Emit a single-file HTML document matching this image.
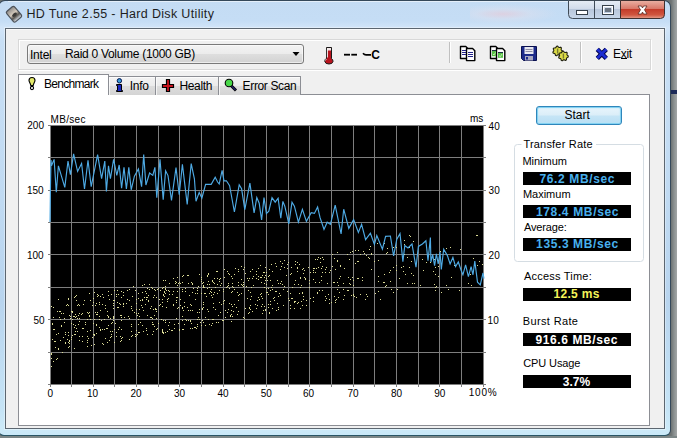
<!DOCTYPE html>
<html><head><meta charset="utf-8">
<style>
*{margin:0;padding:0;box-sizing:border-box}
html,body{width:677px;height:438px;overflow:hidden}
body{position:relative;background:linear-gradient(90deg,#6c7272 671px,#8a9090 674px,#a2a6a6 677px);font-family:"Liberation Sans",sans-serif;color:#000}
.a{position:absolute}
.t{position:absolute;white-space:nowrap;line-height:1.15}
#deskb{left:0;top:436px;width:677px;height:2px;background:#7c8686}
#frame{left:-2px;top:0;width:673px;height:436px;border:1px solid #34485a;border-bottom-color:#2a5666;border-radius:7px 7px 6px 6px;background:linear-gradient(180deg,#c4dcf4 0px,#c5ddf5 20px,#d2e5f8 27px,#c8dff5 40px,#c0daf2 200px,#b8d4ee 300px,#c6e4f6 410px,#cdeaf8 428px,#c8e8f8 435px)}
#tbhl{left:8px;top:1px;width:655px;height:1px;background:rgba(255,255,255,.55)}
#client{left:5px;top:28px;width:660px;height:401px;border:1px solid #5c6670;background:#f0f0f0;box-shadow:inset 0 1px 0 #fafafa,0 0 0 1px rgba(255,255,255,.35)}
#toolbar{left:18px;top:39px;width:633px;height:31px;border:1px solid #d8d8d8;box-shadow:inset 1px 1px 0 #fff,1px 1px 0 #fff}
#combo{left:27px;top:44px;width:277px;height:20px;border:1px solid #7a7a7a;border-radius:3px;background:linear-gradient(180deg,#f3f3f3 0%,#ececec 48%,#dedede 52%,#d2d2d2 100%);box-shadow:inset 0 0 0 1px rgba(255,255,255,.6)}
#panel{left:18px;top:94px;width:632px;height:332px;border:1px solid #8c8e94;background:#fff}
.tab{position:absolute;border:1px solid #8c8e94;border-bottom:none;background:linear-gradient(180deg,#f3f3f3 0%,#ebebeb 50%,#dddddd 51%,#d4d4d4 100%);box-shadow:inset 1px 1px 0 rgba(255,255,255,.7)}
#tab0{left:18px;top:74px;width:91px;height:21px;background:#fff;box-shadow:none}
.val{position:absolute;left:523px;width:108px;height:13px;background:#000}
#startb{left:536px;top:106px;width:86px;height:19px;border:1px solid #2f86bb;border-radius:3px;background:linear-gradient(180deg,#e8f5fc 0%,#dbeef8 48%,#c6e5f6 52%,#b9dff4 100%);box-shadow:inset 0 0 0 1px #84d2f2,inset 0 0 2px 1px #b8e6f8}
</style></head><body>
<div class="a" id="deskb"></div>
<div class="a" id="frame"></div>
<div class="a" id="tbhl"></div>
<div class="a" style="left:470px;top:4px;width:110px;height:20px;background:radial-gradient(ellipse 50% 50% at 30% 50%,rgba(240,200,210,.55),rgba(230,225,235,.35) 50%,rgba(220,230,240,0) 100%)"></div>
<div class="a" style="left:671px;top:90px;width:6px;height:4px;background:#1c2a58"></div>
<div class="a" id="client"></div>
<div class="a" id="toolbar"></div>
<div class="a" id="combo"></div>
<div class="a" id="panel"></div>
<div class="tab" style="left:108px;top:76px;width:48px;height:19px"></div>
<div class="tab" style="left:155px;top:76px;width:64px;height:19px"></div>
<div class="tab" style="left:218px;top:76px;width:83px;height:19px"></div>
<div class="tab" id="tab0"></div>
<div class="a" id="startb"></div>
<div class="val" style="top:172px"></div>
<div class="val" style="top:205px"></div>
<div class="val" style="top:238px"></div>
<div class="val" style="top:288px"></div>
<div class="val" style="top:333px"></div>
<div class="val" style="top:375px"></div>
<svg width="677" height="438" style="position:absolute;left:0;top:0">
<!-- group box -->
<path d="M521.5 144.5H517.5Q514.5 144.5 514.5 147.5V258.5Q514.5 261.5 517.5 261.5H640.5Q643.5 261.5 643.5 258.5V147.5Q643.5 144.5 640.5 144.5H596" fill="none" stroke="#d5dde3"/>
<!-- caption buttons -->
<defs>
<linearGradient id="gbtn" x1="0" y1="0" x2="0" y2="1"><stop offset="0" stop-color="#e7edf5"/><stop offset=".45" stop-color="#d2dceb"/><stop offset=".5" stop-color="#b9c7db"/><stop offset="1" stop-color="#c9d8ea"/></linearGradient>
<linearGradient id="gcls" x1="0" y1="0" x2="0" y2="1"><stop offset="0" stop-color="#eab1a4"/><stop offset=".45" stop-color="#d9796a"/><stop offset=".5" stop-color="#c43c2a"/><stop offset=".8" stop-color="#d0563f"/><stop offset="1" stop-color="#e6a08d"/></linearGradient>
</defs>
<path d="M568.5 0.5V14.5Q568.5 18.5 572.5 18.5H620.5V0.5Z" fill="url(#gbtn)" stroke="#3f4a56"/>
<path d="M594.5 0.5V18.5" stroke="#3f4a56"/>
<path d="M620.5 0.5H664.5V14.5Q664.5 18.5 660.5 18.5H620.5Z" fill="url(#gcls)" stroke="#3f3030"/>
<rect x="576.5" y="10.5" width="11" height="4" fill="#fff" stroke="#36404a"/>
<rect x="602.5" y="5.5" width="11" height="9" fill="none" stroke="#36404a"/>
<rect x="603.5" y="6.5" width="9" height="7" fill="none" stroke="#fff"/>
<rect x="605" y="8" width="6" height="4" fill="#6a7480"/>
<path d="M638 6L641.5 6L642.5 8L643.5 6L647 6L644.5 9.8L647 14L643.5 14L642.5 12L641.5 14L638 14L640.5 9.8Z" fill="#fff" stroke="#5a2a22" stroke-width=".8"/>
<!-- title icon hdd -->
<defs><linearGradient id="ghdd" x1="0" y1="0" x2="0" y2="1"><stop offset="0" stop-color="#8c8a88"/><stop offset=".45" stop-color="#d6cbbd"/><stop offset=".7" stop-color="#5a5650"/><stop offset="1" stop-color="#dfe6ee"/></linearGradient></defs>
<g transform="translate(14,14.2) rotate(-40)">
<rect x="-5.2" y="-6.8" width="10.4" height="13.6" rx="1.8" fill="url(#ghdd)" stroke="#4c525a" stroke-width="1.2"/>
<ellipse cx="0" cy="0.8" rx="2.8" ry="1.6" fill="#3c3a38"/>
</g>
<!-- thermometer -->
<path d="M326.5 47.5H331.5V58.5Q333.2 59.8 333 61.5Q332.5 64 329 64Q325.3 64 324.8 61.5Q324.5 59.6 326.5 58.3Z" fill="#b8141e" stroke="#1a1a1a" stroke-width="1"/>
<rect x="327" y="48" width="4" height="2.5" fill="#f4e8e8"/>
<path d="M327.4 48.3V57.5" stroke="#f8f0f0" stroke-width="1"/>
<path d="M325.5 60.5Q325.8 59.6 326.6 59" stroke="#fff" stroke-width=".8" fill="none"/>
<rect x="344" y="53.8" width="6" height="1.8" fill="#000"/>
<rect x="351.3" y="53.8" width="5.7" height="1.8" fill="#000"/>
<path d="M363 53.2Q364.5 55 366.5 54.8H371" stroke="#000" stroke-width="1.7" fill="none"/>
<!-- separators -->
<path d="M449.5 42V63" stroke="#c0c0c0"/><path d="M450.5 42V63" stroke="#fff"/>
<path d="M580.5 42V63" stroke="#c0c0c0"/><path d="M581.5 42V63" stroke="#fff"/>
<!-- copy icon 1 -->
<g stroke="#000" stroke-width="1.4" fill="#fff" stroke-linejoin="round">
<path d="M460.5 46.5H465.8L467.5 48.2V58.5H460.5Z"/>
<path d="M466.5 48.5H472.6L474.8 50.7V60.6H466.5Z"/>
<path d="M490.5 46.5H495.8L497.5 48.2V58.5H490.5Z"/>
<path d="M496.5 48.5H502.6L504.8 50.7V60.6H496.5Z"/>
</g>
<path d="M462 50.5H466M462 52.5H466M462 54.5H466M468 52.5H473M468 54.5H473M468 56.5H473" stroke="#24248a" stroke-width="1.1"/>
<rect x="492" y="50.2" width="4" height="6" fill="#58c048"/><path d="M492 50.5H496" stroke="#1a3040"/>
<rect x="498" y="52.2" width="5" height="5.6" fill="#58c048"/><path d="M498 52.5H503" stroke="#1a3040"/>
<path d="M493 54L494 55L495.5 52.5M499 55.5L500.3 56.7L502 54" stroke="#d8f8c0" stroke-width=".8" fill="none"/>
<!-- floppy -->
<path d="M521.5 46.5H536.5V60.5H523.5L521.5 58.5Z" fill="#1c2a8a" stroke="#0a1050"/>
<rect x="524.5" y="47" width="9" height="7" fill="#e8e8f0"/>
<path d="M525.5 49.5H532.5M525.5 51.5H532.5" stroke="#9090a8"/>
<rect x="525" y="56" width="8" height="4.5" fill="#a8a8c0"/>
<rect x="526" y="57" width="2" height="2.5" fill="#1c2a8a"/>
<!-- gears -->
<path d="M562.50 51.00L562.38 52.09L561.11 52.69L560.65 53.43L560.66 54.83L559.73 55.41L558.47 54.80L557.60 54.90L556.51 55.78L555.47 55.41L555.17 54.05L554.55 53.43L553.19 53.13L552.82 52.09L553.70 51.00L553.80 50.13L553.19 48.87L553.77 47.94L555.17 47.95L555.91 47.49L556.51 46.22L557.60 46.10L558.47 47.20L559.29 47.49L560.66 47.17L561.43 47.94L561.11 49.31L561.40 50.13Z" fill="#dcdc48" stroke="#202010" stroke-width="1.1" stroke-linejoin="round"/>
<path d="M557.6 48.5V53.5" stroke="#7a7a30" stroke-width="1.4"/>
<path d="M568.30 56.00L568.18 57.09L566.91 57.69L566.45 58.43L566.46 59.83L565.53 60.41L564.27 59.80L563.40 59.90L562.31 60.78L561.27 60.41L560.97 59.05L560.35 58.43L558.99 58.13L558.62 57.09L559.50 56.00L559.60 55.13L558.99 53.87L559.57 52.94L560.97 52.95L561.71 52.49L562.31 51.22L563.40 51.10L564.27 52.20L565.09 52.49L566.46 52.17L567.23 52.94L566.91 54.31L567.20 55.13Z" fill="#dcdc48" stroke="#202010" stroke-width="1.1" stroke-linejoin="round"/>
<path d="M563.4 53.5V58.5" stroke="#7a7a30" stroke-width="1.4"/>
<!-- exit X -->
<path d="M597.3 49.3L606.3 58.3M606.3 49.3L597.3 58.3" stroke="#000048" stroke-width="4.6" stroke-linecap="butt"/>
<path d="M597.3 49.3L606.3 58.3M606.3 49.3L597.3 58.3" stroke="#1c2cd0" stroke-width="2.8" stroke-linecap="butt"/>
<path d="M621 58.5H627" stroke="#000"/>
<!-- dropdown arrow -->
<path d="M292.5 52H299.5L296 56Z" fill="#000"/>
<!-- bulb -->
<path d="M32 77.5C30 77.5 29 79 29 80.5C29 82 30.5 83.5 30.8 85.5H33.2C33.5 83.5 35 82 35 80.5C35 79 34 77.5 32 77.5Z" fill="#e4ea6a" stroke="#000" stroke-width="1.1"/>
<circle cx="32" cy="88" r="1.6" fill="#fff" stroke="#000" stroke-width="1.1"/>
<!-- info -->
<circle cx="119.4" cy="80.8" r="2.2" fill="#3aa0d8" stroke="#001050" stroke-width="1"/>
<path d="M116.5 84.5H121.5V90.5H122.5V91.5H116.5V90.5H117.5V85.5H116.5Z" fill="#1a28c0" stroke="#000" stroke-width="1"/>
<!-- health cross -->
<path d="M166.5 79.5H169.5V84.5H173.5V87.5H169.5V91.5H166.5V87.5H162.5V84.5H166.5Z" fill="#c8141e" stroke="#000" stroke-width="1.2"/>
<!-- magnifier -->
<path d="M231 85.5L236 90.5" stroke="#000" stroke-width="3"/>
<path d="M231 85.5L235.5 90" stroke="#202060" stroke-width="1.6"/>
<circle cx="229" cy="83" r="3.8" fill="#48d848" stroke="#000" stroke-width="1.1"/>
</svg>

<svg width="677" height="438" viewBox="0 0 677 438" style="position:absolute;left:0;top:0">
<rect x="50" y="125" width="434" height="260" fill="#000"/>
<path d="M50.5 125V387M71.5 125V387M93.5 125V387M114.5 125V387M136.5 125V387M158.5 125V387M179.5 125V387M201.5 125V387M223.5 125V387M244.5 125V387M266.5 125V387M288.5 125V387M309.5 125V387M331.5 125V387M353.5 125V387M374.5 125V387M396.5 125V387M418.5 125V387M439.5 125V387M461.5 125V387M483.5 125V387M48 125.5H486M48 157.5H486M48 190.5H486M48 222.5H486M48 254.5H486M48 287.5H486M48 319.5H486M48 352.5H486M48 384.5H486" stroke="#7e7e7e" stroke-width="1" fill="none"/>
<path d="M190 310h1v1h-1zM82 313h1v1h-1zM76 295h1v1h-1zM238 271h1v1h-1zM234 274h1v1h-1zM147 334h1v1h-1zM300 308h1v1h-1zM71 311h1v1h-1zM113 305h1v1h-1zM403 271h1v1h-1zM327 283h1v1h-1zM78 304h1v1h-1zM344 268h1v1h-1zM303 273h1v1h-1zM156 309h1v1h-1zM175 283h1v1h-1zM231 276h1v1h-1zM262 298h1v1h-1zM301 301h1v1h-1zM337 289h1v1h-1zM217 271h1v1h-1zM250 271h1v1h-1zM76 300h1v1h-1zM157 328h1v1h-1zM85 322h1v1h-1zM230 315h1v1h-1zM127 299h1v1h-1zM260 277h1v1h-1zM52 324h1v1h-1zM349 283h1v1h-1zM343 299h1v1h-1zM223 303h1v1h-1zM77 305h1v1h-1zM121 291h1v1h-1zM51 306h1v1h-1zM208 319h1v1h-1zM316 268h1v1h-1zM201 279h1v1h-1zM252 269h1v1h-1zM95 305h1v1h-1zM409 235h1v1h-1zM114 290h1v1h-1zM163 287h1v1h-1zM387 252h1v1h-1zM148 301h1v1h-1zM63 313h1v1h-1zM162 332h1v1h-1zM244 318h1v1h-1zM146 293h1v1h-1zM139 332h1v1h-1zM87 342h1v1h-1zM257 305h1v1h-1zM194 327h1v1h-1zM222 320h1v1h-1zM364 253h1v1h-1zM116 332h1v1h-1zM114 342h1v1h-1zM334 282h1v1h-1zM107 342h1v1h-1zM331 302h1v1h-1zM238 311h1v1h-1zM142 300h1v1h-1zM154 295h1v1h-1zM232 316h1v1h-1zM203 304h1v1h-1zM280 261h1v1h-1zM241 266h1v1h-1zM396 265h1v1h-1zM191 305h1v1h-1zM389 272h1v1h-1zM158 323h1v1h-1zM270 301h1v1h-1zM315 282h1v1h-1zM350 279h1v1h-1zM257 300h1v1h-1zM163 332h1v1h-1zM413 241h1v1h-1zM241 279h1v1h-1zM82 336h1v1h-1zM438 276h1v1h-1zM336 299h1v1h-1zM261 306h1v1h-1zM120 315h1v1h-1zM197 290h1v1h-1zM362 277h1v1h-1zM241 284h1v1h-1zM320 258h1v1h-1zM165 322h1v1h-1zM167 301h1v1h-1zM162 330h1v1h-1zM297 262h1v1h-1zM75 317h1v1h-1zM82 328h1v1h-1zM397 289h1v1h-1zM79 318h1v1h-1zM197 324h1v1h-1zM166 307h1v1h-1zM154 289h1v1h-1zM72 311h1v1h-1zM182 291h1v1h-1zM267 280h1v1h-1zM58 299h1v1h-1zM132 335h1v1h-1zM96 314h1v1h-1zM264 283h1v1h-1zM269 313h1v1h-1zM199 312h1v1h-1zM325 272h1v1h-1zM74 297h1v1h-1zM371 253h1v1h-1zM87 340h1v1h-1zM340 265h1v1h-1zM177 285h1v1h-1zM243 317h1v1h-1zM156 297h1v1h-1zM205 293h1v1h-1zM256 274h1v1h-1zM269 275h1v1h-1zM89 293h1v1h-1zM60 311h1v1h-1zM303 296h1v1h-1zM191 282h1v1h-1zM69 346h1v1h-1zM401 267h1v1h-1zM268 304h1v1h-1zM350 252h1v1h-1zM108 295h1v1h-1zM322 290h1v1h-1zM262 304h1v1h-1zM282 263h1v1h-1zM369 249h1v1h-1zM165 289h1v1h-1zM264 287h1v1h-1zM317 259h1v1h-1zM114 329h1v1h-1zM182 276h1v1h-1zM77 331h1v1h-1zM176 302h1v1h-1zM252 311h1v1h-1zM137 334h1v1h-1zM58 348h1v1h-1zM167 331h1v1h-1zM142 292h1v1h-1zM108 317h1v1h-1zM150 308h1v1h-1zM61 326h1v1h-1zM245 273h1v1h-1zM199 319h1v1h-1zM51 358h1v1h-1zM102 329h1v1h-1zM211 325h1v1h-1zM305 279h1v1h-1zM169 283h1v1h-1zM165 288h1v1h-1zM212 319h1v1h-1zM288 262h1v1h-1zM174 328h1v1h-1zM105 308h1v1h-1zM179 330h1v1h-1zM163 295h1v1h-1zM291 267h1v1h-1zM120 336h1v1h-1zM265 309h1v1h-1zM111 294h1v1h-1zM198 286h1v1h-1zM162 329h1v1h-1zM229 288h1v1h-1zM197 288h1v1h-1zM268 307h1v1h-1zM144 297h1v1h-1zM223 320h1v1h-1zM60 340h1v1h-1zM304 277h1v1h-1zM158 288h1v1h-1zM276 310h1v1h-1zM289 300h1v1h-1zM151 317h1v1h-1zM182 289h1v1h-1zM99 319h1v1h-1zM302 269h1v1h-1zM310 272h1v1h-1zM250 299h1v1h-1zM152 334h1v1h-1zM355 250h1v1h-1zM266 284h1v1h-1zM162 331h1v1h-1zM148 300h1v1h-1zM232 278h1v1h-1zM269 312h1v1h-1zM185 288h1v1h-1zM146 299h1v1h-1zM131 308h1v1h-1zM114 300h1v1h-1zM73 316h1v1h-1zM131 326h1v1h-1zM64 318h1v1h-1zM212 280h1v1h-1zM52 323h1v1h-1zM205 317h1v1h-1zM237 292h1v1h-1zM212 281h1v1h-1zM208 273h1v1h-1zM228 309h1v1h-1zM68 298h1v1h-1zM197 326h1v1h-1zM317 293h1v1h-1zM187 275h1v1h-1zM61 325h1v1h-1zM217 293h1v1h-1zM264 272h1v1h-1zM313 272h1v1h-1zM207 276h1v1h-1zM136 299h1v1h-1zM78 324h1v1h-1zM191 323h1v1h-1zM87 319h1v1h-1zM357 261h1v1h-1zM231 304h1v1h-1zM338 297h1v1h-1zM177 297h1v1h-1zM369 258h1v1h-1zM156 329h1v1h-1zM300 278h1v1h-1zM150 317h1v1h-1zM256 308h1v1h-1zM446 248h1v1h-1zM102 343h1v1h-1zM211 295h1v1h-1zM163 332h1v1h-1zM96 324h1v1h-1zM145 291h1v1h-1zM139 316h1v1h-1zM332 254h1v1h-1zM192 284h1v1h-1zM185 319h1v1h-1zM287 264h1v1h-1zM221 304h1v1h-1zM90 330h1v1h-1zM228 285h1v1h-1zM295 280h1v1h-1zM208 311h1v1h-1zM138 332h1v1h-1zM234 289h1v1h-1zM121 317h1v1h-1zM89 312h1v1h-1zM268 276h1v1h-1zM276 266h1v1h-1zM262 313h1v1h-1zM136 335h1v1h-1zM74 316h1v1h-1zM407 283h1v1h-1zM146 328h1v1h-1zM409 247h1v1h-1zM223 289h1v1h-1zM104 329h1v1h-1zM438 266h1v1h-1zM378 291h1v1h-1zM101 320h1v1h-1zM321 276h1v1h-1zM302 292h1v1h-1zM244 267h1v1h-1zM318 267h1v1h-1zM248 290h1v1h-1zM97 314h1v1h-1zM90 319h1v1h-1zM68 299h1v1h-1zM271 287h1v1h-1zM214 278h1v1h-1zM134 312h1v1h-1zM122 337h1v1h-1zM79 336h1v1h-1zM119 303h1v1h-1zM403 266h1v1h-1zM164 296h1v1h-1zM66 305h1v1h-1zM390 270h1v1h-1zM325 300h1v1h-1zM290 305h1v1h-1zM96 325h1v1h-1zM221 283h1v1h-1zM206 296h1v1h-1zM127 290h1v1h-1zM405 274h1v1h-1zM337 252h1v1h-1zM65 332h1v1h-1zM237 314h1v1h-1zM108 325h1v1h-1zM60 319h1v1h-1zM96 303h1v1h-1zM303 268h1v1h-1zM320 262h1v1h-1zM115 323h1v1h-1zM224 269h1v1h-1zM329 272h1v1h-1zM329 303h1v1h-1zM367 296h1v1h-1zM70 318h1v1h-1zM153 324h1v1h-1zM56 359h1v1h-1zM112 322h1v1h-1zM270 304h1v1h-1zM126 303h1v1h-1zM71 339h1v1h-1zM360 294h1v1h-1zM148 295h1v1h-1zM67 339h1v1h-1zM358 278h1v1h-1zM239 294h1v1h-1zM165 332h1v1h-1zM144 284h1v1h-1zM163 320h1v1h-1zM192 292h1v1h-1zM154 315h1v1h-1zM183 310h1v1h-1zM84 300h1v1h-1zM62 352h1v1h-1zM199 274h1v1h-1zM68 332h1v1h-1zM79 313h1v1h-1zM436 286h1v1h-1zM97 296h1v1h-1zM65 343h1v1h-1zM323 259h1v1h-1zM93 302h1v1h-1zM188 275h1v1h-1zM161 319h1v1h-1zM209 324h1v1h-1zM268 294h1v1h-1zM64 322h1v1h-1zM384 282h1v1h-1zM283 305h1v1h-1zM90 300h1v1h-1zM51 353h1v1h-1zM473 258h1v1h-1zM263 272h1v1h-1zM264 306h1v1h-1zM163 294h1v1h-1zM143 310h1v1h-1zM98 295h1v1h-1zM204 293h1v1h-1zM435 287h1v1h-1zM61 313h1v1h-1zM214 283h1v1h-1zM250 305h1v1h-1zM201 281h1v1h-1zM371 269h1v1h-1zM105 338h1v1h-1zM153 297h1v1h-1zM117 302h1v1h-1zM192 283h1v1h-1zM192 328h1v1h-1zM365 299h1v1h-1zM94 344h1v1h-1zM238 300h1v1h-1zM97 312h1v1h-1zM65 342h1v1h-1zM350 284h1v1h-1zM251 296h1v1h-1zM225 317h1v1h-1zM236 307h1v1h-1zM232 306h1v1h-1zM247 298h1v1h-1zM93 334h1v1h-1zM159 305h1v1h-1zM319 290h1v1h-1zM218 322h1v1h-1zM67 304h1v1h-1zM275 291h1v1h-1zM284 286h1v1h-1zM276 310h1v1h-1zM141 305h1v1h-1zM380 299h1v1h-1zM204 287h1v1h-1zM223 291h1v1h-1zM232 286h1v1h-1zM165 320h1v1h-1zM145 304h1v1h-1zM142 325h1v1h-1zM253 276h1v1h-1zM178 283h1v1h-1zM213 294h1v1h-1zM131 324h1v1h-1zM172 294h1v1h-1zM258 297h1v1h-1zM335 302h1v1h-1zM420 285h1v1h-1zM111 323h1v1h-1zM57 358h1v1h-1zM334 258h1v1h-1zM112 331h1v1h-1zM200 322h1v1h-1zM393 292h1v1h-1zM136 313h1v1h-1zM165 286h1v1h-1zM264 287h1v1h-1zM113 316h1v1h-1zM284 260h1v1h-1zM294 302h1v1h-1zM212 323h1v1h-1zM83 328h1v1h-1zM63 337h1v1h-1zM260 265h1v1h-1zM197 293h1v1h-1zM255 304h1v1h-1zM142 307h1v1h-1zM290 274h1v1h-1zM268 288h1v1h-1zM187 307h1v1h-1zM68 347h1v1h-1zM286 275h1v1h-1zM53 361h1v1h-1zM313 297h1v1h-1zM317 292h1v1h-1zM308 267h1v1h-1zM339 292h1v1h-1zM94 292h1v1h-1zM334 296h1v1h-1zM162 302h1v1h-1zM188 310h1v1h-1zM454 265h1v1h-1zM68 342h1v1h-1zM243 286h1v1h-1zM229 303h1v1h-1zM142 285h1v1h-1zM53 307h1v1h-1zM468 283h1v1h-1zM106 328h1v1h-1zM155 290h1v1h-1zM72 335h1v1h-1zM87 331h1v1h-1zM249 278h1v1h-1zM55 341h1v1h-1zM404 254h1v1h-1zM366 294h1v1h-1zM261 282h1v1h-1zM299 293h1v1h-1zM113 308h1v1h-1zM231 310h1v1h-1zM295 261h1v1h-1zM184 324h1v1h-1zM213 303h1v1h-1zM173 291h1v1h-1zM233 311h1v1h-1zM434 284h1v1h-1zM298 302h1v1h-1zM87 336h1v1h-1zM137 334h1v1h-1zM152 318h1v1h-1zM252 278h1v1h-1zM249 307h1v1h-1zM384 274h1v1h-1zM276 291h1v1h-1zM132 296h1v1h-1zM353 280h1v1h-1zM224 277h1v1h-1zM70 316h1v1h-1zM96 333h1v1h-1zM118 307h1v1h-1zM275 263h1v1h-1zM261 277h1v1h-1zM160 290h1v1h-1zM129 289h1v1h-1zM248 313h1v1h-1zM78 315h1v1h-1zM102 304h1v1h-1zM294 308h1v1h-1zM340 276h1v1h-1zM120 341h1v1h-1zM146 297h1v1h-1zM203 322h1v1h-1zM412 283h1v1h-1zM476 235h1v1h-1zM343 283h1v1h-1zM378 260h1v1h-1zM162 306h1v1h-1zM123 295h1v1h-1zM343 289h1v1h-1zM135 334h1v1h-1zM146 330h1v1h-1zM434 259h1v1h-1zM92 337h1v1h-1zM322 272h1v1h-1zM322 266h1v1h-1zM75 325h1v1h-1zM113 303h1v1h-1zM228 283h1v1h-1zM123 304h1v1h-1zM441 292h1v1h-1zM75 331h1v1h-1zM142 299h1v1h-1zM162 299h1v1h-1zM450 247h1v1h-1zM438 276h1v1h-1zM177 277h1v1h-1zM111 334h1v1h-1zM278 283h1v1h-1zM297 267h1v1h-1zM135 290h1v1h-1zM313 270h1v1h-1zM140 322h1v1h-1zM138 324h1v1h-1zM227 271h1v1h-1zM263 310h1v1h-1zM256 278h1v1h-1zM131 306h1v1h-1zM121 320h1v1h-1zM53 329h1v1h-1zM273 298h1v1h-1zM189 295h1v1h-1zM375 293h1v1h-1zM272 289h1v1h-1zM59 311h1v1h-1zM129 300h1v1h-1zM404 240h1v1h-1zM352 251h1v1h-1zM309 283h1v1h-1zM354 296h1v1h-1zM360 254h1v1h-1zM264 277h1v1h-1zM103 297h1v1h-1zM114 329h1v1h-1zM121 338h1v1h-1zM218 315h1v1h-1zM278 309h1v1h-1zM386 253h1v1h-1zM195 327h1v1h-1zM74 348h1v1h-1zM233 287h1v1h-1zM280 283h1v1h-1zM269 269h1v1h-1zM433 271h1v1h-1zM165 293h1v1h-1zM319 282h1v1h-1zM238 282h1v1h-1zM182 282h1v1h-1zM272 285h1v1h-1zM281 266h1v1h-1zM107 311h1v1h-1zM175 281h1v1h-1zM287 291h1v1h-1zM297 268h1v1h-1zM357 278h1v1h-1zM315 272h1v1h-1zM155 309h1v1h-1zM216 271h1v1h-1zM203 285h1v1h-1zM291 273h1v1h-1zM384 243h1v1h-1zM77 318h1v1h-1zM368 257h1v1h-1zM117 307h1v1h-1zM274 300h1v1h-1zM446 285h1v1h-1zM52 339h1v1h-1zM266 292h1v1h-1zM231 314h1v1h-1zM313 279h1v1h-1zM248 280h1v1h-1zM219 290h1v1h-1zM190 321h1v1h-1zM266 272h1v1h-1zM182 307h1v1h-1zM302 305h1v1h-1zM190 320h1v1h-1zM235 268h1v1h-1zM71 323h1v1h-1zM274 297h1v1h-1zM219 302h1v1h-1zM202 309h1v1h-1zM277 280h1v1h-1zM224 300h1v1h-1zM261 296h1v1h-1zM280 269h1v1h-1zM188 320h1v1h-1zM272 308h1v1h-1zM232 283h1v1h-1zM272 271h1v1h-1zM129 318h1v1h-1zM203 307h1v1h-1zM69 340h1v1h-1zM183 275h1v1h-1zM182 308h1v1h-1zM339 278h1v1h-1zM290 293h1v1h-1zM299 264h1v1h-1zM118 294h1v1h-1zM94 319h1v1h-1zM399 235h1v1h-1zM383 282h1v1h-1zM203 287h1v1h-1zM93 323h1v1h-1zM201 293h1v1h-1zM74 327h1v1h-1zM318 257h1v1h-1zM186 320h1v1h-1zM182 329h1v1h-1zM265 275h1v1h-1zM219 281h1v1h-1zM184 302h1v1h-1zM393 247h1v1h-1zM205 325h1v1h-1zM176 282h1v1h-1zM281 281h1v1h-1zM79 340h1v1h-1zM202 283h1v1h-1zM173 278h1v1h-1zM337 260h1v1h-1zM355 263h1v1h-1zM411 261h1v1h-1zM119 327h1v1h-1zM213 282h1v1h-1zM149 289h1v1h-1zM356 297h1v1h-1zM304 270h1v1h-1zM313 301h1v1h-1zM104 319h1v1h-1zM167 299h1v1h-1zM335 269h1v1h-1zM219 279h1v1h-1zM337 282h1v1h-1zM207 288h1v1h-1zM79 305h1v1h-1zM105 305h1v1h-1zM225 310h1v1h-1zM108 291h1v1h-1zM202 308h1v1h-1zM353 295h1v1h-1zM203 282h1v1h-1zM100 330h1v1h-1zM358 250h1v1h-1zM120 304h1v1h-1zM215 287h1v1h-1zM326 298h1v1h-1zM297 271h1v1h-1zM238 285h1v1h-1zM51 354h1v1h-1zM174 324h1v1h-1zM313 268h1v1h-1zM99 302h1v1h-1zM88 313h1v1h-1zM172 330h1v1h-1zM234 304h1v1h-1zM322 257h1v1h-1zM352 277h1v1h-1zM451 277h1v1h-1zM69 341h1v1h-1zM163 333h1v1h-1zM326 267h1v1h-1zM76 316h1v1h-1zM138 293h1v1h-1zM153 309h1v1h-1zM243 284h1v1h-1zM180 283h1v1h-1zM294 301h1v1h-1zM287 268h1v1h-1zM250 309h1v1h-1zM100 310h1v1h-1zM140 300h1v1h-1zM136 309h1v1h-1zM99 316h1v1h-1zM207 275h1v1h-1zM55 347h1v1h-1zM87 346h1v1h-1zM294 284h1v1h-1zM238 295h1v1h-1zM54 341h1v1h-1zM332 266h1v1h-1zM110 331h1v1h-1zM131 331h1v1h-1zM371 254h1v1h-1zM210 291h1v1h-1zM410 236h1v1h-1zM295 301h1v1h-1zM266 278h1v1h-1zM302 293h1v1h-1zM121 340h1v1h-1zM89 316h1v1h-1zM133 286h1v1h-1zM173 305h1v1h-1zM232 291h1v1h-1zM178 307h1v1h-1zM201 277h1v1h-1zM190 328h1v1h-1zM76 328h1v1h-1zM179 329h1v1h-1zM258 279h1v1h-1zM199 274h1v1h-1zM132 310h1v1h-1zM87 312h1v1h-1zM301 285h1v1h-1zM295 264h1v1h-1zM128 316h1v1h-1zM99 304h1v1h-1zM92 305h1v1h-1zM262 275h1v1h-1zM298 284h1v1h-1zM305 278h1v1h-1zM82 341h1v1h-1zM288 298h1v1h-1zM100 329h1v1h-1zM95 312h1v1h-1zM124 317h1v1h-1zM385 286h1v1h-1zM75 314h1v1h-1zM57 311h1v1h-1zM180 299h1v1h-1zM123 306h1v1h-1zM407 257h1v1h-1zM362 280h1v1h-1zM94 335h1v1h-1zM99 327h1v1h-1zM160 304h1v1h-1zM100 296h1v1h-1zM396 270h1v1h-1zM176 297h1v1h-1zM113 318h1v1h-1zM460 249h1v1h-1zM116 336h1v1h-1zM396 247h1v1h-1zM220 278h1v1h-1zM83 304h1v1h-1zM69 315h1v1h-1zM253 285h1v1h-1zM203 304h1v1h-1zM195 299h1v1h-1zM477 235h1v1h-1zM340 266h1v1h-1zM267 292h1v1h-1zM479 261h1v1h-1zM325 269h1v1h-1zM182 316h1v1h-1zM270 280h1v1h-1zM288 262h1v1h-1zM196 328h1v1h-1zM258 276h1v1h-1zM152 288h1v1h-1zM54 329h1v1h-1zM243 282h1v1h-1zM123 303h1v1h-1zM184 306h1v1h-1zM85 324h1v1h-1zM426 262h1v1h-1zM162 288h1v1h-1zM166 290h1v1h-1zM223 301h1v1h-1zM135 336h1v1h-1zM310 298h1v1h-1zM110 318h1v1h-1zM192 310h1v1h-1zM226 287h1v1h-1zM75 296h1v1h-1zM321 280h1v1h-1zM309 280h1v1h-1zM56 334h1v1h-1zM477 265h1v1h-1zM363 251h1v1h-1zM118 329h1v1h-1zM89 315h1v1h-1zM283 289h1v1h-1zM193 288h1v1h-1zM386 285h1v1h-1zM171 330h1v1h-1zM107 315h1v1h-1zM207 284h1v1h-1zM377 243h1v1h-1zM108 316h1v1h-1zM290 308h1v1h-1zM208 281h1v1h-1zM121 329h1v1h-1zM155 308h1v1h-1zM325 296h1v1h-1zM249 312h1v1h-1zM97 294h1v1h-1zM329 299h1v1h-1zM76 316h1v1h-1zM321 268h1v1h-1zM164 291h1v1h-1zM138 319h1v1h-1zM179 288h1v1h-1zM297 303h1v1h-1zM173 304h1v1h-1zM435 274h1v1h-1zM309 287h1v1h-1zM129 339h1v1h-1zM179 282h1v1h-1zM471 285h1v1h-1zM116 294h1v1h-1zM123 292h1v1h-1zM197 312h1v1h-1zM65 343h1v1h-1zM348 277h1v1h-1zM151 287h1v1h-1zM59 317h1v1h-1zM430 262h1v1h-1zM109 299h1v1h-1zM347 290h1v1h-1zM267 280h1v1h-1zM265 280h1v1h-1zM143 331h1v1h-1zM366 255h1v1h-1zM165 280h1v1h-1zM270 290h1v1h-1zM207 309h1v1h-1zM333 282h1v1h-1zM223 291h1v1h-1zM217 278h1v1h-1zM482 264h1v1h-1zM314 268h1v1h-1zM136 330h1v1h-1zM72 312h1v1h-1zM330 270h1v1h-1zM470 274h1v1h-1zM152 322h1v1h-1zM214 292h1v1h-1zM278 296h1v1h-1zM190 304h1v1h-1zM147 297h1v1h-1zM256 271h1v1h-1zM277 303h1v1h-1zM154 326h1v1h-1zM249 308h1v1h-1zM69 343h1v1h-1zM404 244h1v1h-1zM159 299h1v1h-1zM246 286h1v1h-1zM245 308h1v1h-1zM378 281h1v1h-1zM209 284h1v1h-1zM211 292h1v1h-1zM58 333h1v1h-1zM75 334h1v1h-1zM169 291h1v1h-1zM411 273h1v1h-1zM422 259h1v1h-1zM211 295h1v1h-1zM209 287h1v1h-1zM227 312h1v1h-1zM203 304h1v1h-1zM211 289h1v1h-1zM81 314h1v1h-1zM278 307h1v1h-1zM378 276h1v1h-1zM250 309h1v1h-1zM230 316h1v1h-1zM241 293h1v1h-1zM370 246h1v1h-1zM102 294h1v1h-1zM404 240h1v1h-1zM74 334h1v1h-1zM259 299h1v1h-1zM231 321h1v1h-1zM113 317h1v1h-1zM53 317h1v1h-1zM164 292h1v1h-1zM271 264h1v1h-1zM182 320h1v1h-1zM138 313h1v1h-1zM212 297h1v1h-1zM303 299h1v1h-1zM137 315h1v1h-1zM73 324h1v1h-1zM227 286h1v1h-1zM169 294h1v1h-1zM306 305h1v1h-1zM243 269h1v1h-1zM238 269h1v1h-1zM423 270h1v1h-1zM128 316h1v1h-1zM178 323h1v1h-1zM113 300h1v1h-1zM94 334h1v1h-1zM335 300h1v1h-1zM347 254h1v1h-1zM351 295h1v1h-1zM177 308h1v1h-1zM188 283h1v1h-1zM414 283h1v1h-1zM65 334h1v1h-1zM147 288h1v1h-1zM251 287h1v1h-1zM344 295h1v1h-1zM103 344h1v1h-1zM176 318h1v1h-1zM265 267h1v1h-1zM260 294h1v1h-1zM284 267h1v1h-1zM168 325h1v1h-1zM149 284h1v1h-1zM199 309h1v1h-1zM72 319h1v1h-1zM157 289h1v1h-1zM391 242h1v1h-1zM292 287h1v1h-1zM250 292h1v1h-1zM93 298h1v1h-1zM300 277h1v1h-1zM337 261h1v1h-1zM258 268h1v1h-1zM430 262h1v1h-1zM282 284h1v1h-1zM121 315h1v1h-1zM209 293h1v1h-1zM138 298h1v1h-1zM435 290h1v1h-1zM261 293h1v1h-1zM348 290h1v1h-1zM117 290h1v1h-1zM220 285h1v1h-1zM435 267h1v1h-1zM152 324h1v1h-1zM358 261h1v1h-1zM68 335h1v1h-1zM448 289h1v1h-1zM228 273h1v1h-1zM156 318h1v1h-1zM116 296h1v1h-1zM136 303h1v1h-1zM265 310h1v1h-1zM136 330h1v1h-1zM390 281h1v1h-1zM201 325h1v1h-1zM109 340h1v1h-1zM306 300h1v1h-1zM180 305h1v1h-1zM459 290h1v1h-1zM391 289h1v1h-1zM151 306h1v1h-1zM153 331h1v1h-1zM220 312h1v1h-1zM88 338h1v1h-1zM197 319h1v1h-1zM393 267h1v1h-1zM58 349h1v1h-1zM231 292h1v1h-1zM195 293h1v1h-1zM177 291h1v1h-1zM353 285h1v1h-1zM399 278h1v1h-1zM68 305h1v1h-1zM168 298h1v1h-1zM147 315h1v1h-1zM266 288h1v1h-1zM409 267h1v1h-1zM51 366h1v1h-1zM247 278h1v1h-1zM203 302h1v1h-1zM213 319h1v1h-1zM338 285h1v1h-1zM242 285h1v1h-1zM213 307h1v1h-1zM208 274h1v1h-1zM291 298h1v1h-1zM374 261h1v1h-1zM110 337h1v1h-1zM113 320h1v1h-1zM71 337h1v1h-1zM328 294h1v1h-1zM176 300h1v1h-1zM215 309h1v1h-1zM349 259h1v1h-1zM111 336h1v1h-1zM121 297h1v1h-1zM185 291h1v1h-1zM216 322h1v1h-1zM131 336h1v1h-1zM136 309h1v1h-1zM97 312h1v1h-1zM217 284h1v1h-1zM139 309h1v1h-1zM387 248h1v1h-1zM292 298h1v1h-1zM169 329h1v1h-1zM279 293h1v1h-1zM163 280h1v1h-1zM203 286h1v1h-1zM156 311h1v1h-1zM229 274h1v1h-1zM183 329h1v1h-1zM198 317h1v1h-1zM202 320h1v1h-1zM280 295h1v1h-1zM440 251h1v1h-1zM79 321h1v1h-1zM300 287h1v1h-1zM169 322h1v1h-1zM413 275h1v1h-1zM107 328h1v1h-1zM315 259h1v1h-1zM168 290h1v1h-1zM91 345h1v1h-1zM353 294h1v1h-1z" fill="#dcdc96"/>
<polyline points="50.0,222.0 50.5,185.0 51.0,160.0 51.5,165.8 54.1,159.4 56.3,192.2 58.4,165.8 64.8,187.4 68.0,161.0 70.4,174.6 73.6,153.8 77.6,171.4 81.6,163.4 84.5,189.0 88.0,160.2 91.2,186.6 97.6,154.6 101.6,178.6 104.8,161.0 106.4,191.4 108.5,165.8 110.4,178.6 113.6,159.4 116.8,175.4 119.2,165.0 121.6,188.2 124.0,167.4 126.4,189.0 128.8,167.4 131.2,189.8 134.4,176.2 138.4,169.0 141.6,186.6 143.7,154.6 145.9,185.0 149.6,173.0 152.8,175.4 154.9,167.4 156.8,197.8 160.0,159.4 163.2,199.6 165.6,170.8 168.0,175.6 171.5,200.4 176.0,167.6 179.2,194.8 182.4,164.4 187.2,204.4 191.2,163.6 194.4,178.8 196.0,201.2 199.2,192.4 201.9,198.0 205.6,184.4 211.2,184.4 215.2,177.2 217.6,182.0 219.2,184.0 222.1,170.4 224.0,180.8 226.4,180.8 229.6,185.6 234.4,212.0 239.2,184.8 241.6,188.8 244.8,209.6 249.9,183.2 254.1,212.8 256.8,197.6 259.2,203.2 261.6,220.0 264.0,197.6 266.4,213.6 268.8,211.2 272.0,197.6 275.2,202.2 278.1,198.2 280.8,218.2 282.9,201.4 284.8,206.2 288.8,223.8 292.0,202.2 294.4,206.2 298.4,222.2 302.4,209.4 306.4,221.4 311.2,212.6 314.4,213.4 317.6,207.0 320.0,217.4 324.0,229.4 327.2,222.2 330.4,224.4 335.2,205.2 341.1,234.0 343.7,209.2 348.8,228.4 353.6,219.6 358.4,232.4 361.6,224.4 365.6,239.6 370.4,233.2 374.4,244.4 376.8,235.6 382.4,249.2 385.6,236.4 390.4,236.0 393.6,256.0 396.8,239.2 400.0,233.6 402.9,261.6 404.8,245.6 408.0,248.0 412.0,244.0 416.0,267.2 418.4,246.4 422.4,244.0 425.9,240.8 428.0,260.8 430.4,237.6 430.9,262.0 432.7,254.7 434.6,265.7 436.4,253.8 438.2,263.9 440.0,252.0 441.3,269.4 443.7,249.2 447.4,255.6 450.1,263.9 452.9,257.5 455.6,266.6 458.3,262.0 461.1,270.3 462.9,274.8 465.6,264.8 468.4,276.7 471.1,266.6 473.0,274.8 474.8,261.1 477.5,282.2 480.3,284.9 483.0,273.0 484.0,278.5" fill="none" stroke="#4eaae4" stroke-width="1.15" stroke-linejoin="miter"/>
</svg>
<div class="t" id="title" style="left:26.40px;top:6.90px;font-size:12.5px;font-weight:400;color:#1e1e1e;letter-spacing:0.335px;">HD Tune 2.55 - Hard Disk Utility</div>
<div class="t" id="cb1" style="left:29.90px;top:48.50px;font-size:12px;font-weight:400;color:#000;letter-spacing:-0.200px;">Intel</div>
<div class="t" id="cb2" style="left:64.90px;top:48.00px;font-size:12px;font-weight:400;color:#000;letter-spacing:-0.291px;">Raid 0 Volume (1000 GB)</div>
<div class="t" id="temp" style="left:371.30px;top:49.10px;font-size:12px;font-weight:700;color:#000;letter-spacing:0.000px;">C</div>
<div class="t" id="tb0" style="left:44.00px;top:78.30px;font-size:12px;font-weight:400;color:#000;letter-spacing:-0.700px;">Benchmark</div>
<div class="t" id="tb1" style="left:129.80px;top:79.80px;font-size:12px;font-weight:400;color:#000;letter-spacing:-0.267px;">Info</div>
<div class="t" id="tb2" style="left:179.40px;top:80.00px;font-size:12px;font-weight:400;color:#000;letter-spacing:-0.320px;">Health</div>
<div class="t" id="tb3" style="left:242.60px;top:80.30px;font-size:12px;font-weight:400;color:#000;letter-spacing:-0.356px;">Error Scan</div>
<div class="t" id="exit" style="left:613.00px;top:47.60px;font-size:12px;font-weight:400;color:#000;letter-spacing:-0.267px;">Exit</div>
<div class="t" id="sttxt" style="left:564.50px;top:109.00px;font-size:12px;font-weight:400;color:#000;letter-spacing:-0.000px;">Start</div>
<div class="t" id="l1" style="left:523.40px;top:137.90px;font-size:11px;font-weight:400;color:#000;letter-spacing:0.200px;">Transfer Rate</div>
<div class="t" id="l2" style="left:522.40px;top:154.50px;font-size:11px;font-weight:400;color:#000;letter-spacing:0.000px;">Minimum</div>
<div class="t" id="l3" style="left:522.90px;top:188.30px;font-size:11px;font-weight:400;color:#000;letter-spacing:0.000px;">Maximum</div>
<div class="t" id="l4" style="left:523.90px;top:221.10px;font-size:11px;font-weight:400;color:#000;letter-spacing:-0.114px;">Average:</div>
<div class="t" id="l5" style="left:523.90px;top:269.70px;font-size:11px;font-weight:400;color:#000;letter-spacing:0.218px;">Access Time:</div>
<div class="t" id="l6" style="left:522.80px;top:315.30px;font-size:11px;font-weight:400;color:#000;letter-spacing:0.356px;">Burst Rate</div>
<div class="t" id="l7" style="left:523.20px;top:357.30px;font-size:11px;font-weight:400;color:#000;letter-spacing:-0.100px;">CPU Usage</div>
<div class="t" id="v1" style="left:539.50px;top:172.50px;font-size:12px;font-weight:700;color:#48b0ee;letter-spacing:0.632px;">76.2 MB/sec</div>
<div class="t" id="v2" style="left:535.90px;top:205.50px;font-size:12px;font-weight:700;color:#48b0ee;letter-spacing:0.655px;">178.4 MB/sec</div>
<div class="t" id="v3" style="left:536.10px;top:237.90px;font-size:12px;font-weight:700;color:#48b0ee;letter-spacing:0.611px;">135.3 MB/sec</div>
<div class="t" id="v4" style="left:553.40px;top:287.90px;font-size:12px;font-weight:700;color:#f4f45a;letter-spacing:0.333px;">12.5 ms</div>
<div class="t" id="v5" style="left:535.50px;top:333.50px;font-size:12px;font-weight:700;color:#ffffff;letter-spacing:0.589px;">916.6 MB/sec</div>
<div class="t" id="v6" style="left:562.85px;top:375.50px;font-size:12px;font-weight:700;color:#ffffff;letter-spacing:0.000px;">3.7%</div>
<div class="t" id="a1" style="left:50.50px;top:113.80px;font-size:10px;font-weight:400;color:#000;letter-spacing:0.320px;">MB/sec</div>
<div class="t" id="a2" style="left:470.00px;top:112.90px;font-size:10px;font-weight:400;color:#000;letter-spacing:0.000px;">ms</div>
<div class="t" id="y200" style="left:27.30px;top:120.30px;font-size:10px;font-weight:400;color:#000;letter-spacing:0.000px;">200</div>
<div class="t" id="y150" style="left:27.00px;top:185.00px;font-size:10px;font-weight:400;color:#000;letter-spacing:0.000px;">150</div>
<div class="t" id="y100" style="left:27.00px;top:250.00px;font-size:10px;font-weight:400;color:#000;letter-spacing:0.000px;">100</div>
<div class="t" id="y50" style="left:33.50px;top:315.20px;font-size:10px;font-weight:400;color:#000;letter-spacing:0.000px;">50</div>
<div class="t" id="r40" style="left:488.60px;top:120.50px;font-size:10px;font-weight:400;color:#000;letter-spacing:0.000px;">40</div>
<div class="t" id="r30" style="left:488.60px;top:185.30px;font-size:10px;font-weight:400;color:#000;letter-spacing:0.000px;">30</div>
<div class="t" id="r20" style="left:488.60px;top:250.00px;font-size:10px;font-weight:400;color:#000;letter-spacing:0.000px;">20</div>
<div class="t" id="r10" style="left:487.60px;top:315.00px;font-size:10px;font-weight:400;color:#000;letter-spacing:0.000px;">10</div>
<div class="t" id="x0" style="left:47.40px;top:387.90px;font-size:10px;font-weight:400;color:#000;letter-spacing:0.000px;">0</div>
<div class="t" id="x10" style="left:86.90px;top:387.90px;font-size:10px;font-weight:400;color:#000;letter-spacing:0.000px;">10</div>
<div class="t" id="x20" style="left:130.40px;top:387.90px;font-size:10px;font-weight:400;color:#000;letter-spacing:0.000px;">20</div>
<div class="t" id="x30" style="left:174.00px;top:387.90px;font-size:10px;font-weight:400;color:#000;letter-spacing:0.000px;">30</div>
<div class="t" id="x40" style="left:217.40px;top:387.90px;font-size:10px;font-weight:400;color:#000;letter-spacing:0.000px;">40</div>
<div class="t" id="x50" style="left:260.70px;top:387.90px;font-size:10px;font-weight:400;color:#000;letter-spacing:0.000px;">50</div>
<div class="t" id="x60" style="left:303.00px;top:387.90px;font-size:10px;font-weight:400;color:#000;letter-spacing:0.000px;">60</div>
<div class="t" id="x70" style="left:347.50px;top:387.90px;font-size:10px;font-weight:400;color:#000;letter-spacing:0.000px;">70</div>
<div class="t" id="x80" style="left:390.90px;top:387.90px;font-size:10px;font-weight:400;color:#000;letter-spacing:0.000px;">80</div>
<div class="t" id="x90" style="left:434.30px;top:387.90px;font-size:10px;font-weight:400;color:#000;letter-spacing:0.000px;">90</div>
<div class="t" id="x100" style="left:468.70px;top:387.10px;font-size:10px;font-weight:400;color:#000;letter-spacing:0.800px;">100%</div>
</body></html>
